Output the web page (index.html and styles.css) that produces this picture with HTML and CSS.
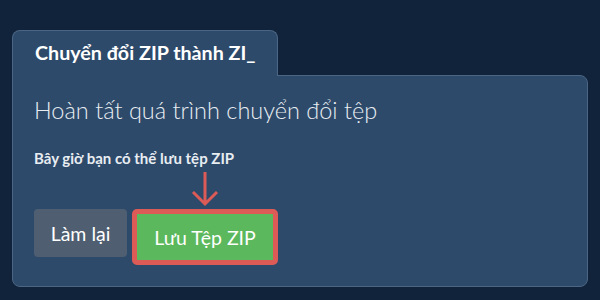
FILE: index.html
```html
<!DOCTYPE html>
<html lang="vi">
<head>
  <meta charset="UTF-8">
  <title>Chuyển đổi ZIP thành ZIP</title>
  <link rel="stylesheet" href="styles.css">
</head>
<body>
  <div class="khung">
    <div class="tab">Chuyển đổi ZIP thành ZI_</div>
    <div class="panel">
      <h2 class="tieude">Hoàn tất quá trình chuyển đổi tệp</h2>
      <p class="mota">Bây giờ bạn có thể lưu tệp ZIP</p>
      <div class="nut-hang">
        <button class="nut nut-lai">Làm lại</button>
        <div class="luu-khung">
          <svg class="mui-ten" width="30" height="36" viewBox="0 0 30 36">
            <path d="M15 1 V33 M3 21 L15 33 L27 21" fill="none" stroke="#dc5b57" stroke-width="3"/>
          </svg>
          <button class="nut nut-luu">Lưu Tệp ZIP</button>
        </div>
      </div>
    </div>
  </div>
</body>
</html>
```

FILE: styles.css
```css
body {
  margin: 0;
  background: #11233a;
  font-family: 'Lato', 'Noto Sans', sans-serif;
  color: #fff;
  height: 300px;
}

.khung {
  padding: 30px 12px 0 12px;
}

.tab {
  width: 242px;
  height: 45px;
  padding: 0 0 0 22px;
  background: #2d4a6a;
  border: 1px solid #4b6584;
  border-bottom: none;
  border-radius: 8px 8px 0 0;
  font-size: 19.7px;
  font-weight: bold;
  line-height: 44px;
  white-space: nowrap;
  overflow: hidden;
  position: relative;
  z-index: 1;
}

.panel {
  width: 553px;
  height: 210px;
  margin-top: -1px;
  padding: 0 0 0 21px;
  background: #2d4a6a;
  border: 1px solid #4b6584;
  border-radius: 0 8px 8px 8px;
}

.tieude {
  margin: 19px 0 0 0;
  font-size: 23.5px;
  font-weight: 300;
  line-height: 30px;
  color: #e8edf2;
}

.mota {
  margin: 24px 0 0 0;
  font-size: 15px;
  font-weight: bold;
  line-height: 18px;
  color: #e8edf2;
}

.nut-hang {
  display: flex;
  align-items: flex-start;
  gap: 5px;
}

.nut {
  font-family: 'Lato', 'Noto Sans', sans-serif;
  font-size: 19.5px;
  color: #fff;
  border: none;
  border-radius: 4px;
  cursor: pointer;
}

.nut-lai {
  margin-top: 42px;
  width: 93px;
  height: 48px;
  background: #4f5f71;
}

.luu-khung {
  display: flex;
  flex-direction: column;
  align-items: center;
}

.mui-ten {
  display: block;
  margin: 4px 0 2px 0;
}

.nut-luu {
  width: 146px;
  height: 56px;
  background: #5cb85c;
  border: 5px solid #dc5b57;
  border-radius: 5px;
}
```
